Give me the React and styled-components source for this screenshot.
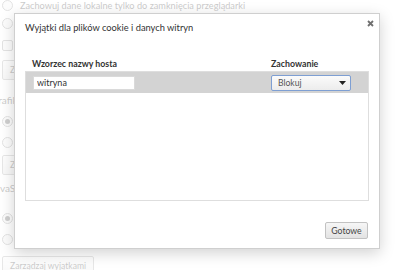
import React from "react";
import styled, { createGlobalStyle } from "styled-components";

const Global = createGlobalStyle`
  html, body { margin: 0; padding: 0; }
  body {
    width: 400px; height: 270px; overflow: hidden; background: #fff;
    font-family: Lato, "Open Sans", "Liberation Sans", sans-serif;
  }
`;

const Stage = styled.div`
  position: relative;
  width: 400px;
  height: 270px;
  overflow: hidden;
`;

const Page = styled.div`
  display: flex;
  flex-direction: column;
  color: #444;
  font-size: 9.2px;
`;

const Row = styled.div`
  display: flex;
  align-items: center;
  gap: 7px;
  height: ${(p) => p.$h}px;
  padding-left: 2px;
  flex-shrink: 0;
`;

const Radio = styled.span`
  width: 9px;
  height: 9px;
  border-radius: 50%;
  border: 1px solid #999;
  background: #f3f3f3;
  display: inline-flex;
  align-items: center;
  justify-content: center;
  &::after {
    content: "";
    width: 5px;
    height: 5px;
    border-radius: 50%;
    background: ${(p) => (p.$on ? "#555" : "transparent")};
  }
`;

const Check = styled.span`
  width: 9px;
  height: 9px;
  border: 1px solid #999;
  border-radius: 2px;
  background: #f3f3f3;
`;

const PageButton = styled.span`
  height: 18px;
  padding: 0 7px;
  border: 1px solid #aaa;
  border-radius: 2px;
  background: linear-gradient(#fafafa, #e6e6e6);
  display: inline-flex;
  align-items: center;
  color: #444;
  font-size: 8.6px;
`;

const SectionLabel = styled.span`
  margin-left: -11px;
  font-size: 10px;
  color: #444;
`;

const Overlay = styled.div`
  position: absolute;
  inset: 0;
  background: rgba(255, 255, 255, 0.72);
`;

const Dialog = styled.div`
  position: absolute;
  left: 14px;
  top: 13px;
  width: 366px;
  height: 236px;
  box-sizing: border-box;
  background: #fff;
  border: 1px solid #cfcfcf;
  box-shadow: 0 4px 14px rgba(0, 0, 0, 0.18);
  display: flex;
  flex-direction: column;
  padding: 0 10px 9px 10px;
`;

const Title = styled.div`
  height: 20px;
  line-height: 20px;
  margin-top: 4px;
  font-size: 9.3px;
  color: #333;
`;

const Close = styled.button`
  position: absolute;
  top: 5px;
  right: 4px;
  width: 9px;
  height: 9px;
  padding: 0;
  border: 0;
  background: none;
  display: flex;
  align-items: center;
  justify-content: center;
`;

const Headers = styled.div`
  display: grid;
  grid-template-columns: 239px 1fr;
  margin-top: 19px;
  height: 14px;
  line-height: 14px;
  padding-left: 7px;
  font-size: 8.8px;
  font-weight: 700;
  color: #333;
`;

const List = styled.div`
  height: 128px;
  border: 1px solid #dedede;
  display: flex;
  flex-direction: column;
`;

const ListRow = styled.div`
  height: 21px;
  background: #d3d3d3;
  display: grid;
  grid-template-columns: 238px 1fr;
  align-items: center;
  padding-left: 7px;
`;

const TextInput = styled.input`
  width: 102px;
  height: 14px;
  box-sizing: border-box;
  border: 1px solid #dadada;
  background: #fff;
  padding: 0 3px;
  margin: 0;
  font-family: inherit;
  font-size: 9px;
  color: #333;
  outline: none;
`;

const Select = styled.div`
  width: 80px;
  height: 16px;
  box-sizing: border-box;
  border: 1px solid #7e9fd3;
  border-radius: 2px;
  background: linear-gradient(#fbfbfb, #ececec);
  display: flex;
  align-items: center;
  justify-content: space-between;
  padding: 0 4px 0 6px;
  font-size: 8.6px;
  color: #555;
`;

const Footer = styled.div`
  margin-top: auto;
  margin-right: 1px;
  display: flex;
  justify-content: flex-end;
`;

const Button = styled.button`
  width: 43px;
  height: 17px;
  box-sizing: border-box;
  border: 1px solid #c2c2c2;
  border-radius: 2px;
  background: linear-gradient(#f6f6f6, #e3e3e3);
  font-family: inherit;
  font-size: 8.7px;
  color: #444;
  padding: 0;
  display: flex;
  align-items: center;
  justify-content: center;
`;

export default function App() {
  return (
    <Stage>
      <Global />
      <Page>
        <Row $h={10}>
          <Radio />
          <span>Zachowuj dane lokalne tylko do zamknięcia przeglądarki</span>
        </Row>
        <Row $h={26}><Radio /></Row>
        <Row $h={18}><Check /></Row>
        <Row $h={32}><PageButton>Zarządzaj wyjątkami</PageButton></Row>
        <Row $h={28}><SectionLabel>Grafika</SectionLabel></Row>
        <Row $h={14}><Radio $on /></Row>
        <Row $h={28}><Radio /></Row>
        <Row $h={18}><PageButton>Zarządzaj wyjątkami</PageButton></Row>
        <Row $h={28}><SectionLabel>JavaScript</SectionLabel></Row>
        <Row $h={32}><Radio $on /></Row>
        <Row $h={10}><Radio /></Row>
        <Row $h={44}><PageButton>Zarządzaj wyjątkami</PageButton></Row>
      </Page>
      <Overlay />
      <Dialog>
        <Title>Wyjątki dla plików cookie i danych witryn</Title>
        <Close aria-label="Zamknij">
          <svg width="7" height="7" viewBox="0 0 7 7">
            <path d="M1 1 L6 6 M6 1 L1 6" stroke="#6f6f6f" strokeWidth="1.8" />
          </svg>
        </Close>
        <Headers>
          <span>Wzorzec nazwy hosta</span>
          <span>Zachowanie</span>
        </Headers>
        <List>
          <ListRow>
            <TextInput defaultValue="witryna" />
            <Select>
              <span>Blokuj</span>
              <svg width="7" height="4" viewBox="0 0 7 4">
                <path d="M0 0 L7 0 L3.5 4 Z" fill="#222" />
              </svg>
            </Select>
          </ListRow>
        </List>
        <Footer>
          <Button>Gotowe</Button>
        </Footer>
      </Dialog>
    </Stage>
  );
}
